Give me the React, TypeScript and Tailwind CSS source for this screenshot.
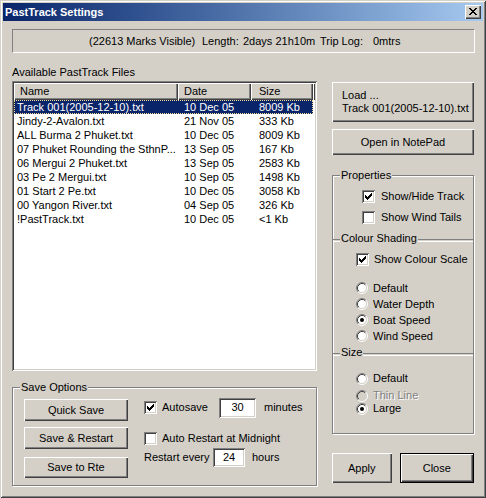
import React from "react";

const FONT = { fontFamily: '"Liberation Sans", Arial, sans-serif' };

const raised = "shadow-[inset_1px_1px_0_#ffffff,inset_-1px_-1px_0_#404040,inset_-2px_-2px_0_#808080]";

function Btn({ children, className = "" }: { children: React.ReactNode; className?: string }) {
  return (
    <div className={`bg-[#D4D0C8] ${raised} flex items-center justify-center text-[11px] text-black ${className}`}>
      {children}
    </div>
  );
}

function CheckMark() {
  const px: [number, number][] = [
    [6, 0], [5, 1], [6, 1], [0, 2], [4, 2], [5, 2], [6, 2], [0, 3], [1, 3], [3, 3], [4, 3], [5, 3],
    [0, 4], [1, 4], [2, 4], [3, 4], [4, 4], [1, 5], [2, 5], [3, 5], [2, 6],
  ];
  return (
    <svg width="13" height="13" className="absolute left-0 top-0" shapeRendering="crispEdges">
      {px.map(([x, y], i) => (
        <rect key={i} x={x + 3} y={y + 3} width="1" height="1" fill="#000" />
      ))}
    </svg>
  );
}

function Check({ checked }: { checked?: boolean }) {
  return (
    <div className="relative w-[13px] h-[13px] shrink-0 bg-white shadow-[inset_1px_1px_0_#808080,inset_-1px_-1px_0_#ffffff,inset_2px_2px_0_#404040,inset_-2px_-2px_0_#D4D0C8]">
      {checked && <CheckMark />}
    </div>
  );
}

function Radio({ checked, disabled }: { checked?: boolean; disabled?: boolean }) {
  return (
    <svg width="12" height="12" className="shrink-0">
      <circle cx="6" cy="6" r="4.5" fill={disabled ? "#D4D0C8" : "#ffffff"} />
      <path d="M2.11 9.89 A5.5 5.5 0 0 1 9.89 2.11" stroke="#808080" fill="none" />
      <path d="M9.89 2.11 A5.5 5.5 0 0 1 2.11 9.89" stroke="#ffffff" fill="none" />
      <path d="M2.82 9.18 A4.5 4.5 0 0 1 9.18 2.82" stroke="#404040" fill="none" />
      <path d="M9.18 2.82 A4.5 4.5 0 0 1 2.82 9.18" stroke="#D4D0C8" fill="none" />
      {checked && <circle cx="6" cy="6" r="2" fill="#000" />}
    </svg>
  );
}

function Sep({ label }: { label: string }) {
  return (
    <div className="relative h-[2px] border-t border-[#808080] shadow-[0_1px_0_#ffffff]">
      <span className="absolute left-[7px] -top-[8px] bg-[#D4D0C8] px-[1px] leading-[13px] text-[11px]">{label}</span>
    </div>
  );
}

const files: [string, string, string][] = [
  ["Track 001(2005-12-10).txt", "10 Dec 05", "8009 Kb"],
  ["Jindy-2-Avalon.txt", "21 Nov 05", "333 Kb"],
  ["ALL Burma 2 Phuket.txt", "10 Dec 05", "8009 Kb"],
  ["07 Phuket Rounding the SthnP...", "13 Sep 05", "167 Kb"],
  ["06 Mergui 2 Phuket.txt", "13 Sep 05", "2583 Kb"],
  ["03 Pe 2 Mergui.txt", "10 Sep 05", "1498 Kb"],
  ["01 Start 2 Pe.txt", "10 Dec 05", "3058 Kb"],
  ["00 Yangon River.txt", "04 Sep 05", "326 Kb"],
  ["!PastTrack.txt", "10 Dec 05", "<1 Kb"],
];

function CloseGlyph() {
  const rows = ["XX....XX", ".XX..XX.", "..XXXX..", "...XX...", "..XXXX..", ".XX..XX.", "XX....XX"];
  const rects: React.ReactNode[] = [];
  rows.forEach((r, y) =>
    r.split("").forEach((c, x) => {
      if (c === "X") rects.push(<rect key={`${x}-${y}`} x={x + 4} y={y + 3} width="1" height="1" fill="#000" />);
    })
  );
  return (
    <svg width="16" height="14" shapeRendering="crispEdges">
      {rects}
    </svg>
  );
}

export default function App() {
  return (
    <div
      style={FONT}
      className="w-[486px] h-[498px] bg-[#D4D0C8] p-[3px] text-[11px] text-black select-none shadow-[inset_1px_1px_0_#D4D0C8,inset_-1px_-1px_0_#404040,inset_2px_2px_0_#ffffff,inset_-2px_-2px_0_#808080]"
    >
      {/* Title bar */}
      <div className="h-[18px] flex items-center bg-gradient-to-r from-[#0A246A] to-[#A6CAF0] pl-[2px] pr-[2px]">
        <span className="text-white font-bold text-[11px] leading-[13px]">PastTrack Settings</span>
        <div className="ml-auto">
          <div className={`w-[16px] h-[14px] bg-[#D4D0C8] ${raised}`}>
            <CloseGlyph />
          </div>
        </div>
      </div>

      <div className="px-[9px]">
        {/* Status box */}
        <div className="mt-[8px] h-[24px] w-[463px] border-t border-l border-[#808080] border-b border-r border-b-white border-r-white flex items-center leading-[13px] whitespace-nowrap">
          <span className="ml-[76px] w-[113px]">(22613 Marks Visible)</span>
          <span className="w-[41px]">Length:</span>
          <span className="w-[77px]">2days 21h10m</span>
          <span className="w-[53px]">Trip Log:</span>
          <span>0mtrs</span>
        </div>

        <div className="flex">
          {/* Left column */}
          <div className="w-[306px] flex flex-col">
            <div className="mt-[13px] h-[13px] leading-[13px]">Available PastTrack Files</div>
            <div className="mt-[2px] h-[290px] bg-white shadow-[inset_1px_1px_0_#808080,inset_-1px_-1px_0_#ffffff,inset_2px_2px_0_#404040,inset_-2px_-2px_0_#D4D0C8] p-[2px]">
              <div className="flex h-[17px]">
                <div className={`w-[164px] bg-[#D4D0C8] ${raised} pl-[6px] leading-[17px]`}>Name</div>
                <div className={`w-[73px] bg-[#D4D0C8] ${raised} pl-[6px] leading-[17px]`}>Date</div>
                <div className={`w-[62px] bg-[#D4D0C8] ${raised} pl-[8px] leading-[17px]`}>Size</div>
                <div className={`flex-1 bg-[#D4D0C8] ${raised}`} />
              </div>
              <div className="flex flex-col">
                {files.map(([n, d, s], i) => {
                  const sel = i === 0;
                  return (
                    <div
                      key={i}
                      className={`flex h-[14px] leading-[12px] w-[299px] whitespace-nowrap ${
                        sel ? "bg-[#0A246A] text-white border border-dotted border-[#F5DB95]" : "border border-transparent"
                      }`}
                    >
                      <div className="w-[163px] pl-[2px] overflow-hidden">{n}</div>
                      <div className="w-[73px] pl-[6px]">{d}</div>
                      <div className="w-[61px] pl-[8px]">{s}</div>
                    </div>
                  );
                })}
              </div>
            </div>

            {/* Save Options */}
            <div className="relative mt-[16px] h-[99px] border border-[#808080] shadow-[1px_1px_0_#ffffff,inset_1px_1px_0_#ffffff] flex">
              <span className="absolute left-[7px] -top-[7px] bg-[#D4D0C8] px-[1px] leading-[13px]">Save Options</span>
              <div className="ml-[11px] mt-[11px] flex flex-col">
                <Btn className="w-[104px] h-[22px]">Quick Save</Btn>
                <Btn className="w-[104px] h-[22px] mt-[6px]">Save &amp; Restart</Btn>
                <Btn className="w-[104px] h-[21px] mt-[8px]">Save to Rte</Btn>
              </div>
              <div className="ml-[16px] mt-[13px] flex flex-col">
                <div className="flex items-center h-[13px]">
                  <Check checked />
                  <span className="ml-[5px] leading-[13px] w-[57px]">Autosave</span>
                  <div className="w-[37px] h-[20px] bg-white shadow-[inset_1px_1px_0_#808080,inset_-1px_-1px_0_#ffffff,inset_2px_2px_0_#404040,inset_-2px_-2px_0_#D4D0C8] flex items-center justify-center">
                    30
                  </div>
                  <span className="ml-[8px]">minutes</span>
                </div>
                <div className="flex items-center h-[13px] mt-[18px]">
                  <Check />
                  <span className="ml-[5px] leading-[13px]">Auto Restart at Midnight</span>
                </div>
                <div className="flex items-center mt-[3px] h-[19px]">
                  <span className="w-[69px]">Restart every</span>
                  <div className="w-[32px] h-[19px] bg-white shadow-[inset_1px_1px_0_#808080,inset_-1px_-1px_0_#ffffff,inset_2px_2px_0_#404040,inset_-2px_-2px_0_#D4D0C8] flex items-center justify-center">
                    24
                  </div>
                  <span className="ml-[7px]">hours</span>
                </div>
              </div>
            </div>
          </div>

          {/* Right column */}
          <div className="ml-[15px] w-[142px] flex flex-col">
            <Btn className="mt-[29px] h-[40px] !justify-start">
              <div className="pl-[10px] leading-[13px]">
                <div>Load ...</div>
                <div>Track 001(2005-12-10).txt</div>
              </div>
            </Btn>
            <Btn className="mt-[7px] h-[26px]">Open in NotePad</Btn>

            <div className="relative mt-[20px] h-[259px] border border-[#808080] shadow-[1px_1px_0_#ffffff,inset_1px_1px_0_#ffffff] flex flex-col">
              <span className="absolute left-[7px] -top-[7px] bg-[#D4D0C8] px-[1px] leading-[13px]">Properties</span>
              <div className="mt-[14px] pl-[29px] flex items-center h-[13px]">
                <Check checked />
                <span className="ml-[6px] leading-[13px]">Show/Hide Track</span>
              </div>
              <div className="mt-[8px] pl-[29px] flex items-center h-[13px]">
                <Check />
                <span className="ml-[6px] leading-[13px]">Show Wind Tails</span>
              </div>
              <div className="mt-[15px]">
                <Sep label="Colour Shading" />
              </div>
              <div className="mt-[12px] pl-[23px] flex items-center h-[13px]">
                <Check checked />
                <span className="ml-[5px] leading-[13px]">Show Colour Scale</span>
              </div>
              <div className="mt-[14px] flex flex-col">
                {[
                  ["Default", false],
                  ["Water Depth", false],
                  ["Boat Speed", true],
                  ["Wind Speed", false],
                ].map(([l, c]) => (
                  <div key={l as string} className="pl-[23px] flex items-center h-[16px]">
                    <Radio checked={c as boolean} />
                    <span className="ml-[5px] leading-[13px]">{l as string}</span>
                  </div>
                ))}
              </div>
              <div className="mt-[9px]">
                <Sep label="Size" />
              </div>
              <div className="mt-[17px] pl-[23px] flex items-center h-[13px]">
                <Radio />
                <span className="ml-[5px] leading-[13px]">Default</span>
              </div>
              <div className="mt-[4px] pl-[23px] flex items-center h-[13px]">
                <Radio disabled />
                <span className="ml-[5px] leading-[13px] text-[#808080] [text-shadow:1px_1px_0_#ffffff]">Thin Line</span>
              </div>
              <div className="pl-[23px] flex items-center h-[13px]">
                <Radio checked />
                <span className="ml-[5px] leading-[13px]">Large</span>
              </div>
            </div>

            <div className="mt-[19px] flex">
              <Btn className="w-[60px] h-[30px]">Apply</Btn>
              <div className="ml-[8px] w-[75px] h-[30px] border border-black">
                <Btn className="w-full h-full">Close</Btn>
              </div>
            </div>
          </div>
        </div>
      </div>
    </div>
  );
}
